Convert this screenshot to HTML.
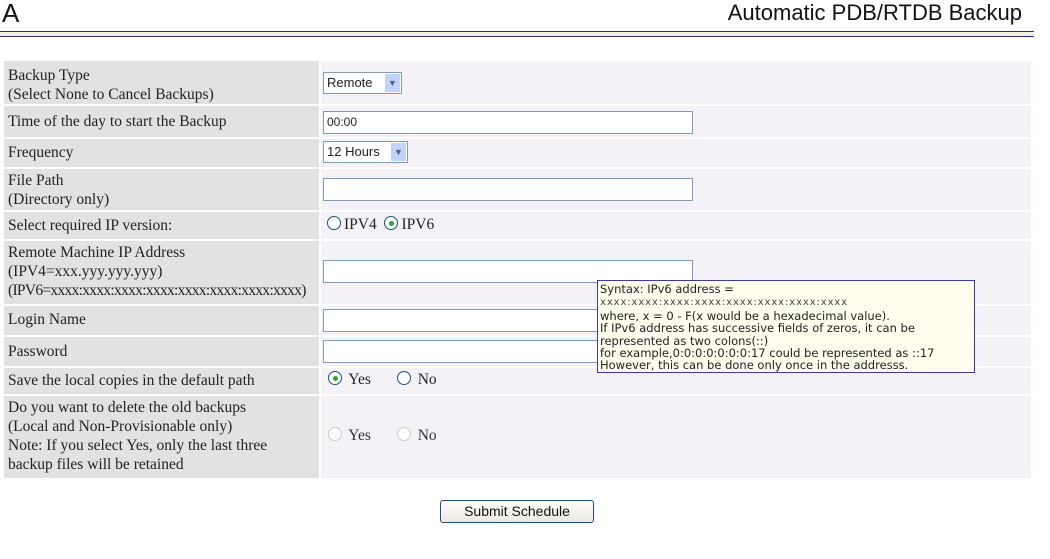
<!DOCTYPE html>
<html><head><style>
body{margin:0;width:1050px;height:559px;background:#fff;position:relative;overflow:hidden;font-family:"Liberation Serif",serif;font-size:15.5px;color:#222}
.a{position:absolute}
.h1{left:2px;top:-2px;font:26px "Liberation Sans",sans-serif;color:#111}
.h2{right:28px;top:0px;font:22px "Liberation Sans",sans-serif;color:#111}
.l{position:absolute;left:4px;width:315px;background:#e4e1e5;box-sizing:border-box;padding:3px 0 0 4px;line-height:19px;white-space:nowrap}
.v{position:absolute;left:321px;width:710px;background:#f4f2f6}
.in{position:absolute;left:323px;width:365px;height:21px;border:1px solid #7f9db9;background:#fff;font:12px "Liberation Sans",sans-serif;line-height:21px;padding-left:3px;box-sizing:content-box}
.sel{position:absolute;left:323px;height:20px;border:1px solid #7f9db9;background:#fff;font:13px "Liberation Sans",sans-serif;line-height:20px;padding-left:3px}
.sel i{position:absolute;right:1px;top:1px;width:15px;height:18px;background:#c1d3fb;color:#4d6185;font-style:normal;font-size:9px;text-align:center;line-height:18px}
.r{display:inline-block;width:12px;height:12px;border:1px solid #1c5180;border-radius:50%;background:#fff;vertical-align:-1px;position:relative;margin-right:3px}
.r.on:after{content:"";position:absolute;left:3.5px;top:3.5px;width:5px;height:5px;border-radius:50%;background:#2da42d}
.r.dis{border-color:#ccc}
.t{position:absolute;font-size:15.5px}
</style></head><body>
<div class="a h1">A</div>
<div class="a h2">Automatic PDB/RTDB Backup</div>
<div class="a" style="left:0;top:31px;width:1034px;height:1px;background:#2c2c7a"></div>
<div class="a" style="left:0;top:32px;width:1034px;height:4px;background:#f3f1dc"></div>
<div class="a" style="left:0;top:36px;width:1034px;height:1px;background:#2c2c7a"></div>

<div class="l" style="top:61px;height:43px;padding-top:5px">Backup Type<br>(Select None to Cancel Backups)</div><div class="v" style="top:61px;height:43px"></div>
<div class="sel" style="top:72px;width:74px">Remote<i>&#9660;</i></div>
<div class="l" style="top:106px;height:31px;padding-top:6px">Time of the day to start the Backup</div><div class="v" style="top:106px;height:31px"></div>
<div class="in" style="top:111px">00:00</div>
<div class="l" style="top:139px;height:28px;padding-top:4px">Frequency</div><div class="v" style="top:139px;height:28px"></div>
<div class="sel" style="top:141px;width:80px">12 Hours<i>&#9660;</i></div>
<div class="l" style="top:169px;height:41px;padding-top:2px">File Path<br>(Directory only)</div><div class="v" style="top:169px;height:41px"></div>
<div class="in" style="top:178px"></div>
<div class="l" style="top:212px;height:27px;padding-top:4px">Select required IP version:</div><div class="v" style="top:212px;height:27px"></div>
<div class="t" style="left:327px;top:216px"><span class="r"></span>IPV4 &nbsp;<span class="r on"></span>IPV6</div>
<div class="l" style="top:241px;height:63px;padding-top:2px">Remote Machine IP Address<br>(IPV4=xxx.yyy.yyy.yyy)<br><span style="letter-spacing:-0.7px">(IPV6=xxxx:xxxx:xxxx:xxxx:xxxx:xxxx:xxxx:xxxx)</span></div><div class="v" style="top:241px;height:63px"></div>
<div class="in" style="top:260px"></div>
<div class="l" style="top:306px;height:29px;padding-top:4px">Login Name</div><div class="v" style="top:306px;height:29px"></div>
<div class="in" style="top:309px"></div>
<div class="l" style="top:337px;height:29px;padding-top:5px">Password</div><div class="v" style="top:337px;height:29px"></div>
<div class="in" style="top:340px"></div>
<div class="l" style="top:368px;height:26px;padding-top:3px">Save the local copies in the default path</div><div class="v" style="top:368px;height:26px"></div>
<div class="t" style="left:328px;top:371px"><span class="r on"></span> Yes<span style="display:inline-block;width:26px"></span><span class="r"></span> No</div>
<div class="l" style="top:396px;height:82px;padding-top:2px">Do you want to delete the old backups<br>(Local and Non-Provisionable only)<br>Note: If you select Yes, only the last three<br>backup files will be retained</div><div class="v" style="top:396px;height:82px"></div>
<div class="t" style="left:328px;top:427px;color:#333"><span class="r dis"></span> Yes<span style="display:inline-block;width:26px"></span><span class="r dis"></span> No</div>

<div class="a" style="left:597px;top:280px;width:378px;height:93px;border:1px solid #3b3b9a;background:#fffeee;box-sizing:border-box;padding:2px 0 0 2px;font:11.5px 'DejaVu Sans',sans-serif;line-height:12.4px;color:#222;white-space:nowrap;overflow:hidden">Syntax: IPv6 address =<br><span style="font-size:10px;letter-spacing:0.9px;color:#444">xxxx:xxxx:xxxx:xxxx:xxxx:xxxx:xxxx:xxxx</span><br>where, x = 0 - F(x would be a hexadecimal value).<br>If IPv6 address has successive fields of zeros, it can be<br>represented as two colons(::)<br>for example,0:0:0:0:0:0:0:17 could be represented as ::17<br>However, this can be done only once in the addresss.</div>

<div class="a" style="left:440px;top:500px;width:152px;height:21px;border:1px solid #24498a;border-radius:3px;background:linear-gradient(#fdfdfd,#ece9e2);font:14px 'Liberation Sans',sans-serif;text-align:center;line-height:21px;color:#111">Submit Schedule</div>
</body></html>
